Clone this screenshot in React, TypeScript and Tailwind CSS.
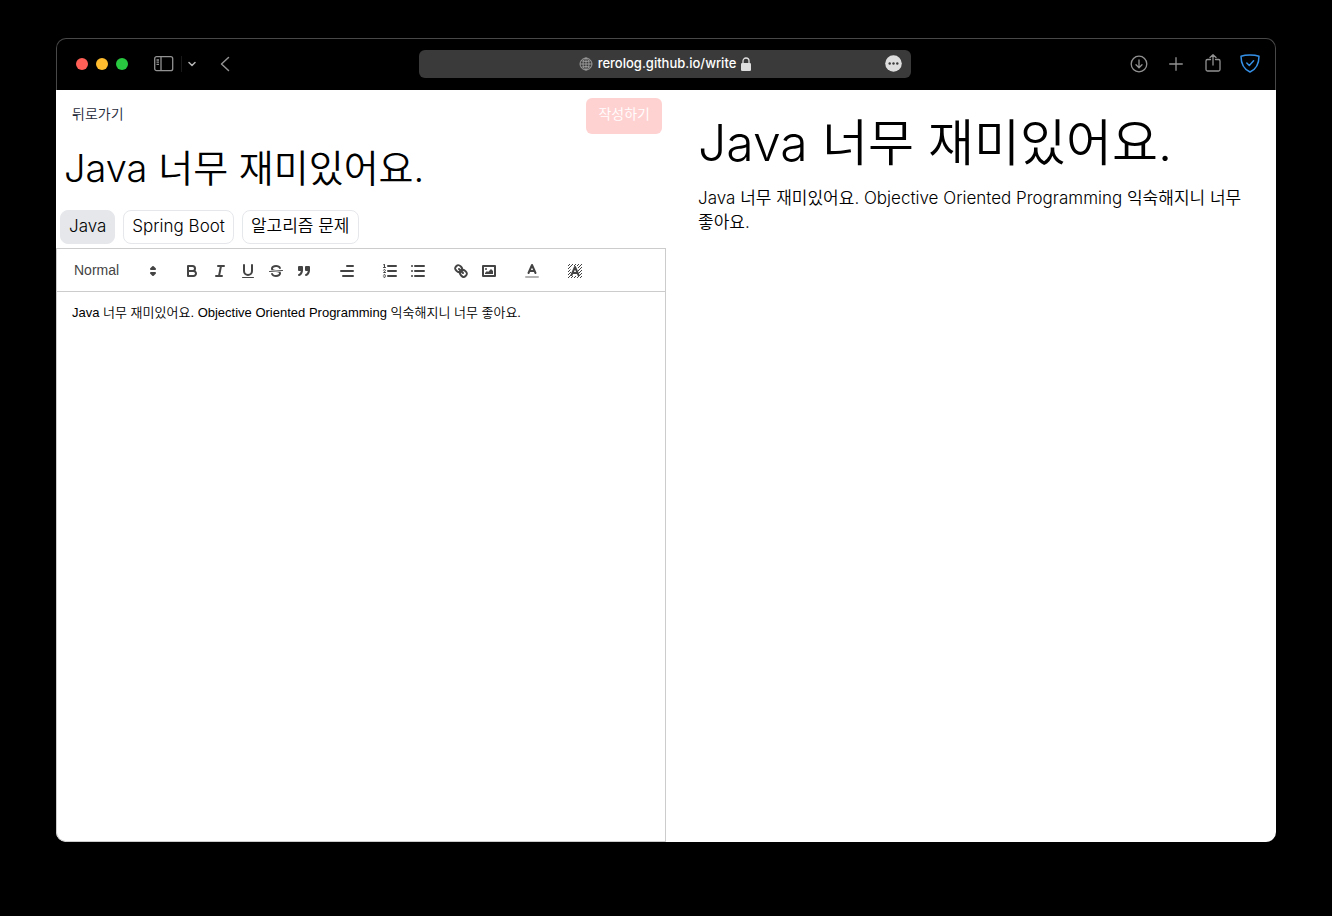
import React, { useState } from "react";

const INK = "stroke-[#444] fill-none stroke-2 [stroke-linecap:round] [stroke-linejoin:round]";
const THIN = "stroke-[#444] fill-none stroke-1 [stroke-linecap:round] [stroke-linejoin:round]";
const FILL = "fill-[#444]";
const BODY = "font-['Inter','Noto_Sans_CJK_KR',sans-serif]";

function Tool({ label, children }: { label: string; children: React.ReactNode }) {
  return (
    <button type="button" aria-label={label} className="flex h-6 w-7 items-center justify-center">
      <svg viewBox="0 0 18 18" className="size-[18px]">{children}</svg>
    </button>
  );
}

function Toolbar() {
  return (
    <div className="flex items-center gap-[15px] border border-[#ccc] px-2 pt-[10px] pb-2">
      <div className="relative flex h-6 w-[98px] items-start">
        <select
          aria-label="Paragraph style"
          className="h-[22px] w-full appearance-none bg-transparent pl-[9px] font-['Liberation_Sans',sans-serif] text-sm font-medium text-[#444] outline-none"
        >
          <option>Normal</option>
          <option>Heading 1</option>
          <option>Heading 2</option>
        </select>
        <svg viewBox="0 0 18 18" className="pointer-events-none absolute top-[3px] right-px size-[18px]">
          <polygon className="fill-[#444] stroke-[#444] stroke-2 [stroke-linejoin:round]" points="7 11 9 13 11 11 7 11" />
          <polygon className="fill-[#444] stroke-[#444] stroke-2 [stroke-linejoin:round]" points="7 7 9 5 11 7 7 7" />
        </svg>
      </div>
      <div className="flex">
        <Tool label="Bold">
          <path className={INK} d="M5,4H9.5A2.5,2.5,0,0,1,12,6.5v0A2.5,2.5,0,0,1,9.5,9H5V4Z" />
          <path className={INK} d="M5,9h5.5A2.5,2.5,0,0,1,13,11.5v0A2.5,2.5,0,0,1,10.5,14H5V9Z" />
        </Tool>
        <Tool label="Italic">
          <path className={INK} d="M7 4H13M5 14H11M8 14L10 4" />
        </Tool>
        <Tool label="Underline">
          <path className={INK} d="M5,3V9a4.012,4.012,0,0,0,4,4H9a4.012,4.012,0,0,0,4-4V3" />
          <rect className={FILL} height="1" rx="0.5" width="12" x="3" y="15" />
        </Tool>
        <Tool label="Strikethrough">
          <path className={THIN} d="M15.5 8.5L2.5 9.5" />
          <path className={FILL} d="M9.007,8C6.542,7.791,6,7.519,6,6.5,6,5.792,7.283,5,9,5c1.571,0,2.765.679,2.969,1.309a1,1,0,0,0,1.9-.617C13.356,4.106,11.354,3,9,3,6.2,3,4,4.538,4,6.5a3.2,3.2,0,0,0,.5,1.843Z" />
          <path className={FILL} d="M8.984,10C11.457,10.208,12,10.479,12,11.5c0,0.708-1.283,1.5-3,1.5-1.571,0-2.765-.679-2.969-1.309a1,1,0,1,0-1.9.617C4.644,13.894,6.646,15,9,15c2.8,0,5-1.538,5-3.5a3.2,3.2,0,0,0-.5-1.843Z" />
        </Tool>
        <Tool label="Quote">
          <g className="fill-[#444] stroke-[#444] stroke-2 [stroke-linecap:round] [stroke-linejoin:round]">
            <rect height="3" width="3" x="4" y="5" />
            <rect height="3" width="3" x="11" y="5" />
            <path d="M7,8c0,4.031-3,5-3,5" />
            <path d="M14,8c0,4.031-3,5-3,5" />
          </g>
        </Tool>
      </div>
      <Tool label="Align">
        <path className={INK} d="M15 9H3M15 14H5M15 4H9" />
      </Tool>
      <div className="flex">
        <Tool label="Numbered list">
          <path className={INK} d="M7 4H15M7 9H15M7 14H15" />
          <path className={THIN} d="M2.5 5.5H4.5" />
          <path className={FILL} d="M3.5,6A0.5,0.5,0,0,1,3,5.5V3.085l-0.276.138A0.5,0.5,0,0,1,2.053,3c-0.124-.247-0.023-0.324.224-0.447l1-.5A0.5,0.5,0,0,1,4,2.5v3A0.5,0.5,0,0,1,3.5,6Z" />
          <path className={THIN} d="M4.5,10.5h-2c0-.234,1.85-1.076,1.85-2.234A0.959,0.959,0,0,0,2.5,8.156" />
          <path className={THIN} d="M2.5,14.846a0.959,0.959,0,0,0,1.85-.109A0.7,0.7,0,0,0,3.75,14a0.688,0.688,0,0,0,.6-0.736,0.959,0.959,0,0,0-1.85-.109" />
        </Tool>
        <Tool label="Bulleted list">
          <path className={INK} d="M6 4H15M6 9H15M6 14H15M3 4H3.01M3 9H3.01M3 14H3.01" />
        </Tool>
      </div>
      <div className="flex">
        <Tool label="Link">
          <path className={INK} d="M7 7L11 11" />
          <path className={INK} d="M8.9,4.577a3.476,3.476,0,0,1,.36,4.679A3.476,3.476,0,0,1,4.577,8.9C3.185,7.5,2.035,6.4,4.217,4.217S7.5,3.185,8.9,4.577Z" />
          <path className={INK} d="M13.423,9.1a3.476,3.476,0,0,0-4.679-.36,3.476,3.476,0,0,0,.36,4.679c1.392,1.392,2.5,2.542,4.679.36S14.815,10.5,13.423,9.1Z" />
        </Tool>
        <Tool label="Image">
          <rect className={INK} height="10" width="12" x="3" y="4" />
          <circle className={FILL} cx="6" cy="7" r="1" />
          <polyline className={FILL} points="5 12 5 11 7 9 8 10 11 7 13 9 13 12 5 12" />
        </Tool>
      </div>
      <Tool label="Text colour">
        <path className="stroke-[#444] stroke-2 opacity-40 [stroke-linecap:round]" d="M3 15H15" />
        <path className={INK} d="M5.5 11L9 3L12.5 11M11.63 9H6.38" />
      </Tool>
      <Tool label="Highlight colour">
        <path className="stroke-[#444] fill-none stroke-1" d="M2 4L4 2M2 7L7 2M2 10L4.500 7.500M2 13L5 10M2 16L5 13M5 16L7 14M8 16L10 14M11 16L16 11M14 16L16 14M13 11L16 8M12 9L16 5M11 4L13 2M12 6L16 2M8 4L10 2" />
        <path className={INK} d="M5.5 13L9 5L12.500 13M11.630 11H6.380" />
      </Tool>
    </div>
  );
}

function BrowserBar() {
  return (
    <header className="grid h-[52px] grid-cols-[1fr_492px_1fr] items-center rounded-t-[10px] border border-b-0 border-[#484848] bg-black pr-0.5 pb-0.5 text-[#929292]">
      <div className="flex items-center pl-[19px]">
        <div className="flex gap-2">
          <span className="size-3 rounded-full bg-[#ff5f57]" />
          <span className="size-3 rounded-full bg-[#febc2e]" />
          <span className="size-3 rounded-full bg-[#28c840]" />
        </div>
        <button type="button" aria-label="Sidebar" className="ml-[26px]">
          <svg viewBox="0 0 20 16" className="h-4 w-5 fill-none stroke-current stroke-[1.3]">
            <rect x="0.700" y="0.700" width="18" height="14" rx="2" />
            <path d="M7 1V15M2.500 4H5M2.500 6.200H5M2.500 8.400H5" />
          </svg>
        </button>
        <span className="ml-[7px] h-4 w-px bg-[#191919]" />
        <button type="button" aria-label="Tab groups" className="ml-1.5">
          <svg viewBox="0 0 8 6" className="h-[6px] w-2 fill-none stroke-[#b4b4b4] stroke-[1.5] [stroke-linecap:round] [stroke-linejoin:round]">
            <path d="M1 1.500L4 4.500L7 1.500" />
          </svg>
        </button>
        <button type="button" aria-label="Back" className="ml-6">
          <svg viewBox="0 0 10 16" className="h-4 w-[10px] fill-none stroke-current stroke-[1.5] [stroke-linecap:round] [stroke-linejoin:round]">
            <path d="M8.500 1.500L1.500 8L8.500 14.500" />
          </svg>
        </button>
      </div>
      <div className="grid h-7 grid-cols-[1fr_auto_1fr] items-center rounded-md bg-[#3a3a3a]">
        <span />
        <div className="flex items-center gap-[5px]">
          <svg viewBox="0 0 14 14" className="size-[14px] fill-none stroke-[#a0a0a0] stroke-[0.9]">
            <circle cx="7" cy="7" r="6" />
            <ellipse cx="7" cy="7" rx="3" ry="6" />
            <path d="M7 1V13M1 7H13M2 3.800Q7 5.200 12 3.800M2 10.200Q7 8.800 12 10.200" />
          </svg>
          <span className="font-['Inter',sans-serif] text-[13px] font-medium text-white">rerolog.github.io/write</span>
          <svg viewBox="0 0 10 14" className="h-[14px] w-[10px]">
            <rect x="0" y="6" width="10" height="8" rx="1.300" className="fill-[#dedede]" />
            <path d="M2 7V4a3 3 0 0 1 6 0V7" className="fill-none stroke-[#dedede] stroke-[1.3]" />
          </svg>
        </div>
        <button type="button" aria-label="Page options" className="mr-[9px] justify-self-end">
          <svg viewBox="0 0 17 17" className="size-[17px]">
            <circle cx="8.500" cy="8.500" r="8.300" className="fill-[#dedede]" />
            <g className="fill-[#3a3a3a]">
              <circle cx="4.700" cy="8.500" r="1.200" />
              <circle cx="8.500" cy="8.500" r="1.200" />
              <circle cx="12.300" cy="8.500" r="1.200" />
            </g>
          </svg>
        </button>
      </div>
      <div className="flex items-center justify-end gap-[17px] pr-[13px]">
        <button type="button" aria-label="Downloads">
          <svg viewBox="0 0 20 20" className="size-5 fill-none stroke-current stroke-[1.3] [stroke-linecap:round] [stroke-linejoin:round]">
            <circle cx="10" cy="10" r="7.800" />
            <path d="M10 6V13.500M7 10.800L10 13.800L13 10.800" />
          </svg>
        </button>
        <button type="button" aria-label="New tab">
          <svg viewBox="0 0 20 20" className="size-5 fill-none stroke-current stroke-[1.3] [stroke-linecap:round]">
            <path d="M10 3.700V16.300M3.700 10H16.300" />
          </svg>
        </button>
        <button type="button" aria-label="Share">
          <svg viewBox="0 0 20 20" className="size-5 fill-none stroke-current stroke-[1.3] [stroke-linecap:round] [stroke-linejoin:round]">
            <path d="M7.500 5.500H4.500A1.500 1.500 0 0 0 3 7V15.500A1.500 1.500 0 0 0 4.500 17H15.500A1.500 1.500 0 0 0 17 15.500V7A1.500 1.500 0 0 0 15.500 5.500H12.500M10 11V0.900M7 3.500L10 0.700L13 3.500" />
          </svg>
        </button>
        <button type="button" aria-label="Shield">
          <svg viewBox="0 0 20 20" className="size-5 fill-none stroke-[#3590e6] stroke-[1.5] [stroke-linecap:round] [stroke-linejoin:round]">
            <path d="M10 0.900C7 0.900 3.500 1.300 1 2.200C1 8.500 3 14.800 10 18C17 14.800 19 8.500 19 2.200C16.500 1.300 13 0.900 10 0.900Z" />
            <path d="M6.800 9L9.300 11.500L13.600 6.800" />
          </svg>
        </button>
      </div>
    </header>
  );
}

const TAGS = ["Java", "Spring Boot", "알고리즘 문제"];

export default function App() {
  const [title, setTitle] = useState("Java 너무 재미있어요.");
  const [body, setBody] = useState("Java 너무 재미있어요. Objective Oriented Programming 익숙해지니 너무 좋아요.");
  const [tag, setTag] = useState("Java");

  return (
    <div className={`${BODY} flex min-h-screen flex-col bg-black px-14 pt-[38px] pb-[74px] font-[350] text-black`}>
      <BrowserBar />
      <main className="grid flex-1 grid-cols-2 overflow-hidden rounded-b-[10px] bg-white">
        <section className="flex flex-col">
          <div className="flex items-start justify-between pt-2 pr-1 pl-4">
            <a href="#back" className="pt-1.5 text-sm text-gray-800">뒤로가기</a>
            <button type="button" className="h-9 rounded-md bg-[#ffd2d2] px-3 pb-1 text-sm text-white">작성하기</button>
          </div>
          <input
            aria-label="Title"
            value={title}
            onChange={(e) => setTitle(e.target.value)}
            className="mt-2 h-[52px] w-full px-2 text-[38px] outline-none"
          />
          <div className="flex gap-2 px-1 pt-4 pb-1">
            {TAGS.map((name) => (
              <button
                key={name}
                type="button"
                onClick={() => setTag(name)}
                className={`h-[34px] rounded-lg border border-gray-200 px-2 pb-0.5 text-[17px] leading-6 ${tag === name ? "bg-gray-200" : "bg-white"}`}
              >
                {name}
              </button>
            ))}
          </div>
          <Toolbar />
          <textarea
            aria-label="Content"
            value={body}
            onChange={(e) => setBody(e.target.value)}
            className="flex-1 resize-none rounded-bl-[10px] border border-t-0 border-[#ccc] px-[15px] py-3 font-['Liberation_Sans','Noto_Sans_CJK_KR',sans-serif] text-[13px] leading-[18px] outline-none"
          />
        </section>
        <article className="px-8 pt-7 break-keep">
          <h1 className="text-[50px] leading-[50px]">{title}</h1>
          <p className="mt-[18px] text-[17px] leading-6">{body}</p>
        </article>
      </main>
    </div>
  );
}
